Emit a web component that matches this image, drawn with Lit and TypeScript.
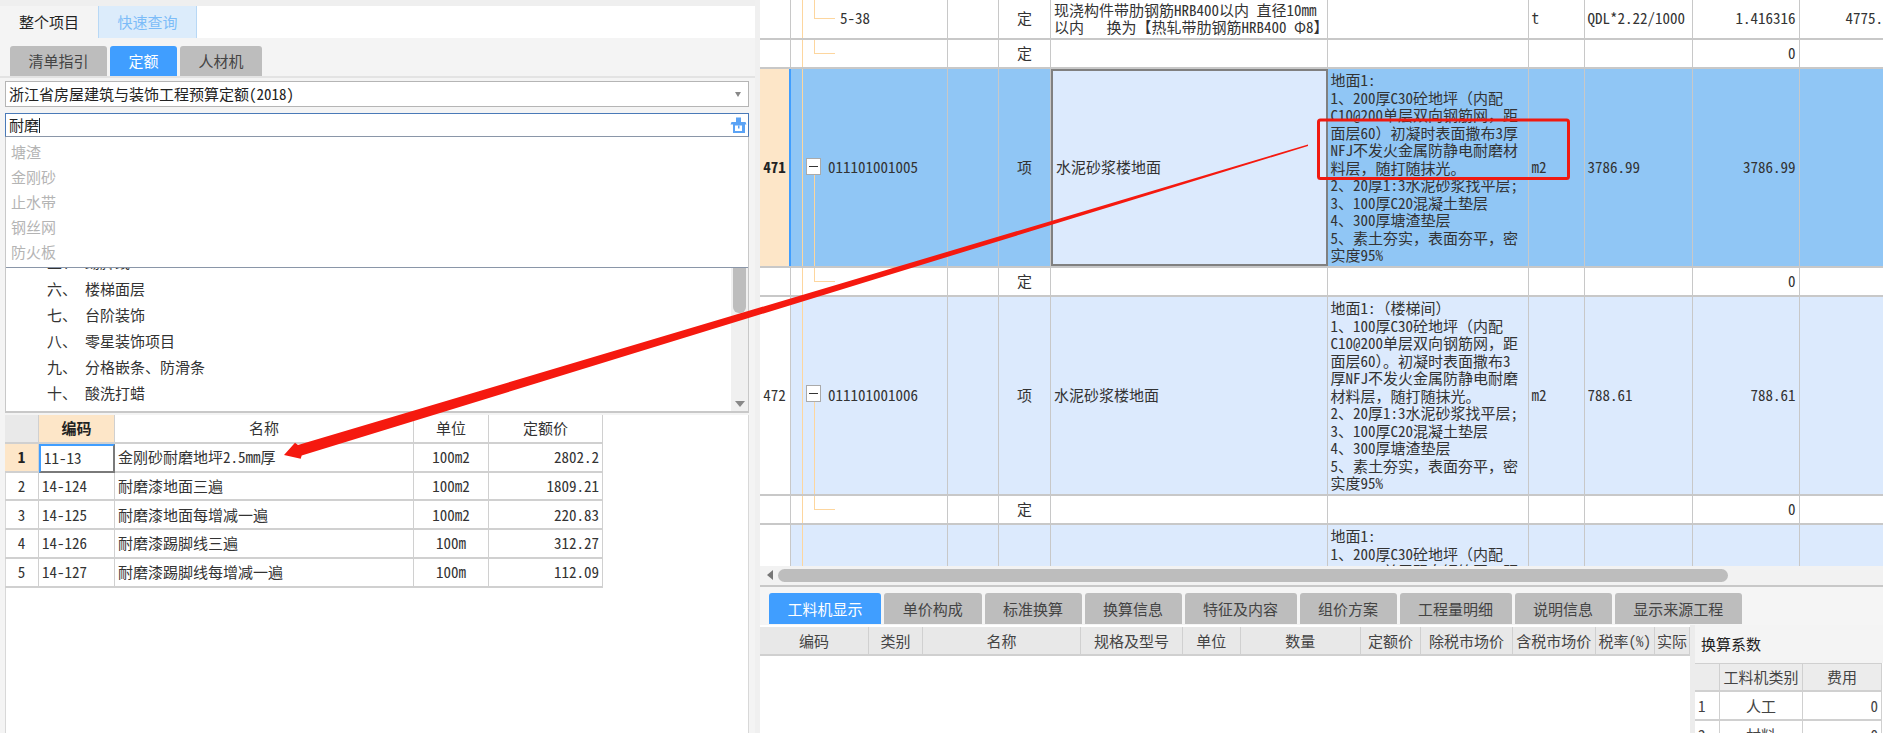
import { LitElement, html, css, svg } from "lit";
import { customElement } from "lit/decorators.js";

const TREE = [
  ["五、", "踢脚线"],
  ["六、", "楼梯面层"], ["七、", "台阶装饰"], ["八、", "零星装饰项目"], ["九、", "分格嵌条、防滑条"], ["十、", "酸洗打蜡"],
];
const QUOTA = [
  ["11-13", "金刚砂耐磨地坪2.5mm厚", "100m2", "2802.2"],
  ["14-124", "耐磨漆地面三遍", "100m2", "1809.21"],
  ["14-125", "耐磨漆地面每增减一遍", "100m2", "220.83"],
  ["14-126", "耐磨漆踢脚线三遍", "100m", "312.27"],
  ["14-127", "耐磨漆踢脚线每增减一遍", "100m", "112.09"],
];
const SUGGEST = ["塘渣", "金刚砂", "止水带", "钢丝网", "防火板"];
const BOTTOM_TABS = ["工料机显示", "单价构成", "标准换算", "换算信息", "特征及内容", "组价方案", "工程量明细", "说明信息", "显示来源工程"];
const BOTTOM_W = [112, 97.5, 97, 97, 112, 97, 112, 97, 127.5];
const HEAD_COLS: [string, number][] = [["编码", 109], ["类别", 54], ["名称", 158], ["规格及型号", 102], ["单位", 57.5], ["数量", 120.5], ["定额价", 60], ["除税市场价", 92], ["含税市场价", 82.5], ["税率(%)", 59.5], ["实际", 35]];

const F471 = `地面1:
1、200厚C30砼地坪（内配
C10@200单层双向钢筋网，距
面层60）初凝时表面撒布3厚
NFJ不发火金属防静电耐磨材
料层，随打随抹光。
2、20厚1:3水泥砂浆找平层;
3、100厚C20混凝土垫层
4、300厚塘渣垫层
5、素土夯实，表面夯平，密
实度95%`;
const F472 = `地面1:（楼梯间）
1、100厚C30砼地坪（内配
C10@200单层双向钢筋网，距
面层60）。初凝时表面撒布3
厚NFJ不发火金属防静电耐磨
材料层，随打随抹光。
2、20厚1:3水泥砂浆找平层;
3、100厚C20混凝土垫层
4、300厚塘渣垫层
5、素土夯实，表面夯平，密
实度95%`;
const F473 = `地面1:
1、200厚C30砼地坪（内配
C10@200单层双向钢筋网，距`;

/* The half-width feature keeps digits at half an em; CJK punctuation stays full width. */
const fw = (text: string) =>
  text.split(/([，（）])/).map((p) => (/^[，（）]$/.test(p) ? html`<span class="fw">${p}</span>` : p));

@customElement("app-root")
export class AppRoot extends LitElement {
  static styles = css`
    :host {
      display: block; position: relative; width: 1883px; height: 733px; overflow: hidden; background: #f4f4f4;
      font-family: "Noto Sans CJK SC", sans-serif; font-size: 15px; line-height: 17.5px; color: #333;
      font-feature-settings: "hwid";
    }
    .fw { font-feature-settings: normal; }
    .root { display: flex; height: 733px; }
    .left { width: 755px; flex: none; display: flex; flex-direction: column; background: #f4f4f4; }
    .top-pad { height: 6px; background: #efefef; }
    .top-tabs { display: flex; height: 32px; background: #fff; }
    .tt { display: flex; align-items: center; justify-content: center; }
    .tt.a { width: 98px; background: #f4f4f4; color: #222; }
    .tt.b { width: 99px; background: #dcecfb; color: #7cbcf8; border-left: 1px solid #b8d8f5; border-right: 1px solid #b8d8f5; box-sizing: border-box; }
    .sub-tabs { display: flex; gap: 3px; height: 30px; padding: 8px 0 0 10px; border-bottom: 2px solid #e3e3e3; }
    .st { background: #bdbdbd; color: #444; border-radius: 3px 3px 0 0; display: flex; align-items: center; justify-content: center; }
    .st.on { background: #409eff; color: #fff; }
    .pick { margin: 3px 6px 0 5px; height: 26px; box-sizing: border-box; border: 1px solid #b5b5b5; background: #fff; display: flex; align-items: center; padding-left: 3px; color: #222; justify-content: space-between; }
    .caret { width: 0; height: 0; border: 3px solid transparent; border-top: 5px solid #888; border-bottom: 0; margin-right: 7px; }
    .search { margin: 6px 6px 0 5px; height: 24px; box-sizing: border-box; border: 1px solid #4a7ab8; border-bottom-color: #8a96a8; background: #fff; display: flex; align-items: center; justify-content: space-between; padding: 0 1px 0 3px; color: #222; }
    .cursor { display: inline-block; width: 1px; height: 15px; background: #222; vertical-align: -2px; }
    .tree { position: relative; margin: 0 6px 0 5px; height: 276px; box-sizing: border-box; background: #fff; border-left: 1px solid #c8c8c8; border-right: 1px solid #c8c8c8; border-bottom: 2px solid #c8c8c8; padding-top: 112px; overflow: hidden; }
    .tree-row { height: 26.2px; display: flex; align-items: center; padding-left: 41px; color: #333; }
    .tree-row b { font-weight: 400; width: 38px; }
    .drop { position: absolute; left: -1px; right: -1px; top: 0; height: 131px; box-sizing: border-box; background: #fff; border: 1px solid #8a96a8; border-top: 0; padding: 2px 0 0 5px; color: #b4b4b4; }
    .drop div { height: 25px; display: flex; align-items: center; }
    .vbar { position: absolute; right: 0; top: 0; bottom: 0; width: 17px; background: #f0f0f0; }
    .vthumb { position: absolute; left: 2px; right: 2px; top: 100px; height: 76px; background: #bdbdbd; border-radius: 0 0 6px 6px; }
    .varrow { position: absolute; left: 4px; bottom: 4px; width: 0; height: 0; border: 5px solid transparent; border-top: 6px solid #888; border-bottom: 0; }
    .quota { margin: 2px 6px 0 5px; flex: 1; background: #fff; box-shadow: inset 1px 0 #d8d8d8, inset -1px 0 #d8d8d8; }
    .q-grid { display: grid; grid-template-columns: 34px 76px 299px 75px 114px; width: 598px; }
    .q-grid > div { height: 28.8px; box-sizing: border-box; border-right: 1px solid #d0d0d0; border-bottom: 2px solid #d0d0d0; display: flex; align-items: center; padding: 0 3px 1px; white-space: nowrap; }
    .q-grid .hd { justify-content: center; }
    .q-grid .ctr { justify-content: center; }
    .q-grid .rt { justify-content: flex-end; }
    .q-grid .rowh { justify-content: center; }
    .q-grid .corner { background: #e9e9e9; }
    .q-grid .hot { background: #fde6c8; font-weight: 700; color: #222; }
    .q-grid .cur { border: 2px solid #7a7a7a; border-top-color: #409eff; border-left-color: #409eff; }

    .divider { width: 5px; flex: none; background: #f0f0f0; }
    .right { flex: 1; min-width: 0; display: flex; flex-direction: column; }
    .sheet { height: 566px; overflow: hidden; background: #fff; position: relative; }
    .row { display: grid; grid-template-columns: 29px 2px 157px 51px 52px 276.5px 201px 56px 108px 107px 90px; box-sizing: border-box; border-bottom: 2px solid #c8c8c8; }
    .row > div { border-right: 1px solid #c8c8c8; box-sizing: border-box; display: flex; align-items: center; padding: 0 3px 2px; position: relative; min-width: 0; white-space: nowrap; overflow: hidden; }
    .row .rowh { justify-content: center; padding: 0 0 2px; border-right: 0; }
    .row .bar { padding: 0; border-right: 1px solid #c8c8c8; }
    .row .rt { justify-content: flex-end; }
    .row .mid { justify-content: center; }
    .row .feat { align-items: flex-start; padding: 2px 3px 0; }
    .row .price { padding-left: 46px; }
    .row.sel > div { background: #90c6f5; }
    .row.sel .rowh { background: #fde6c8; font-weight: 700; color: #222; }
    .row.sel .bar { background: #409eff; border-right: 0; }
    .row.sel .namecell { background: #dceafd; border: 2px solid #808080; }
    .row.tint > div { background: #dceafd; }
    .row.tint .rowh, .row.tint .bar { background: #fff; }
    .vl { position: absolute; width: 1px; background: #fdd69e; }
    .hl { position: absolute; height: 1px; background: #fdd69e; }
    .minus { position: absolute; left: 15px; width: 15px; height: 17px; box-sizing: border-box; background: #fff; border: 1px solid #aaa; display: flex; align-items: center; justify-content: center; }
    .minus i { display: block; width: 9px; height: 1px; background: #333; }
    .code { padding-left: 34px; }
    .sub { padding-left: 46px; }
    .prewrap { white-space: pre; }
    .hscroll { height: 21px; box-sizing: border-box; background: #f2f2f2; border-bottom: 2px solid #c8c8c8; position: relative; display: flex; align-items: center; padding: 0 0 1px 7px; gap: 5px; flex: none; }
    .harrow { width: 0; height: 0; border: 5px solid transparent; border-right: 6px solid #777; border-left: 0; }
    .hthumb { width: 950px; height: 13px; background: #bdbdbd; border-radius: 7px; }
    .btabs { display: flex; gap: 3px; height: 32px; padding: 6px 0 0 9px; flex: none; background: #f5f5f5; }
    .bt { background: #bdbdbd; color: #444; border-radius: 3px 3px 0 0; display: flex; align-items: center; justify-content: center; box-sizing: border-box; height: 31px; white-space: nowrap; }
    .bt.on { background: #409eff; color: #fff; }
    .lower { flex: 1; display: flex; min-height: 0; background: #fff; }
    .lower-main { width: 930px; flex: none; overflow: hidden; }
    .lh { display: flex; height: 29px; box-sizing: border-box; background: #e8e8e8; border-bottom: 2px solid #d0d0d0; margin-top: 2px; }
    .lh div { flex: none; box-sizing: border-box; border-right: 1px solid #d0d0d0; display: flex; align-items: center; justify-content: center; white-space: nowrap; overflow: hidden; color: #444; }
    .coef { flex: 1; background: #f4f4f4; border-left: 5px solid #ececec; display: flex; flex-direction: column; min-width: 0; }
    .coef h4 { margin: 0; font-weight: 400; font-size: 15px; height: 38px; display: flex; align-items: center; padding-left: 6px; color: #222; flex: none; }
    .c-grid { display: grid; grid-template-columns: 25px 83px 79px; background: #fff; }
    .c-grid div { height: 29px; box-sizing: border-box; border-right: 1px solid #d0d0d0; border-bottom: 2px solid #d0d0d0; display: flex; align-items: center; justify-content: center; padding: 0 3px; color: #444; }
    .c-grid .hd { background: #ececec; border-top: 1px solid #d0d0d0; }
    .c-grid .l { justify-content: flex-start; }
    .c-grid .r { justify-content: flex-end; }
    .annot { position: absolute; left: 0; top: 0; width: 1883px; height: 733px; pointer-events: none; }
  `;

  private sheetRow(o: { cls?: string; h: number; num?: string; code?: unknown; kind?: string; name?: unknown; feat?: string; unit?: string; expr?: string; qty?: string; price?: string; deco?: unknown }) {
    return html`<div class="row ${o.cls ?? ""}" style="height:${o.h}px">
      <div class="rowh">${o.num ?? ""}</div>
      <div class="bar"></div>
      <div>${o.deco ?? ""}${o.code ?? ""}</div>
      <div></div>
      <div class="mid">${o.kind ?? ""}</div>
      <div class="namecell">${o.name ?? ""}</div>
      <div class="${o.feat ? "feat" : ""}">${o.feat ? html`<span class="prewrap">${fw(o.feat)}</span>` : ""}</div>
      <div>${o.unit ?? ""}</div>
      <div>${o.expr ?? ""}</div>
      <div class="rt">${o.qty ?? ""}</div>
      <div class="price">${o.price ?? ""}</div>
    </div>`;
  }

  private treeLines(h: number, opts: { branchY?: number; box?: number; subFrom?: number; subTo?: number }) {
    return html`
      <span class="vl" style="left:11px;top:0;height:${h}px"></span>
      ${opts.subTo !== undefined ? html`<span class="vl" style="left:23px;top:${opts.subFrom ?? 0}px;height:${opts.subTo - (opts.subFrom ?? 0)}px"></span>` : ""}
      ${opts.branchY !== undefined ? html`<span class="hl" style="left:23px;width:21px;top:${opts.branchY}px"></span>` : ""}
      ${opts.box !== undefined ? html`<span class="minus" style="top:${opts.box}px"><i></i></span>` : ""}
    `;
  }

  render() {
    return html`
      <div class="root">
        <div class="left">
          <div class="top-pad"></div>
          <div class="top-tabs">
            <div class="tt a">整个项目</div>
            <div class="tt b">快速查询</div>
          </div>
          <div class="sub-tabs">
            <div class="st" style="width:97px">清单指引</div>
            <div class="st on" style="width:67px">定额</div>
            <div class="st" style="width:82px">人材机</div>
          </div>
          <div class="pick"><span>浙江省房屋建筑与装饰工程预算定额(2018)</span><span class="caret"></span></div>
          <div class="search">
            <span>耐磨<span class="cursor"></span></span>
            <svg width="17" height="17" viewBox="0 0 17 17">
              <path d="M6 0.5h5v4.5h4.5l1 2.5h-1.5v8.5H3V7.5H0.5l1-2.5H6z" fill="#5ba3f5"/>
              <rect x="5" y="8.5" width="7" height="5.5" fill="#fff"/>
              <rect x="8" y="8.5" width="1.5" height="3" fill="#5ba3f5"/>
            </svg>
          </div>
          <div class="tree">
            ${TREE.map(([n, t]) => html`<div class="tree-row"><b>${n}</b>${t}</div>`)}
            <div class="vbar"><div class="vthumb"></div><div class="varrow"></div></div>
            <div class="drop">${SUGGEST.map((s) => html`<div>${s}</div>`)}</div>
          </div>
          <div class="quota">
            <div class="q-grid">
              <div class="corner"></div><div class="hot hd">编码</div><div class="hd">名称</div><div class="hd">单位</div><div class="hd">定额价</div>
              ${QUOTA.map((r, i) => html`
                <div class="rowh ${i === 0 ? "hot" : ""}">${i + 1}</div>
                <div class="${i === 0 ? "cur" : ""}">${r[0]}</div>
                <div>${r[1]}</div>
                <div class="ctr">${r[2]}</div>
                <div class="rt">${r[3]}</div>
              `)}
            </div>
          </div>
        </div>
        <div class="divider"></div>
        <div class="right">
          <div class="sheet">
            ${this.sheetRow({ h: 40, kind: "定", deco: this.treeLines(40, { subFrom: 0, subTo: 18, branchY: 18 }), code: html`<span class="sub">5-38</span>`,
              name: html`<span class="prewrap">现浇构件带肋钢筋HRB400以内 直径10mm
以内   换为【热轧带肋钢筋HRB400 Φ8】</span>`, unit: "t", expr: "QDL*2.22/1000", qty: "1.416316", price: "4775.51" })}
            ${this.sheetRow({ h: 29, kind: "定", deco: this.treeLines(29, { subFrom: 0, subTo: 13, branchY: 13 }), qty: "0" })}
            ${this.sheetRow({ cls: "sel", h: 199, num: "471", kind: "项", deco: this.treeLines(199, { box: 89, subFrom: 105, subTo: 199 }), code: html`<span class="code">011101001005</span>`, name: "水泥砂浆楼地面", feat: F471, unit: "m2", expr: "3786.99", qty: "3786.99" })}
            ${this.sheetRow({ h: 29, kind: "定", deco: this.treeLines(29, { subFrom: 0, subTo: 13, branchY: 13 }), qty: "0" })}
            ${this.sheetRow({ cls: "tint", h: 199, num: "472", kind: "项", deco: this.treeLines(199, { box: 88, subFrom: 104, subTo: 199 }), code: html`<span class="code">011101001006</span>`, name: "水泥砂浆楼地面", feat: F472, unit: "m2", expr: "788.61", qty: "788.61" })}
            ${this.sheetRow({ h: 29, kind: "定", deco: this.treeLines(29, { subFrom: 0, subTo: 13, branchY: 13 }), qty: "0" })}
            ${this.sheetRow({ cls: "tint", h: 199, deco: this.treeLines(199, {}), feat: F473 })}
          </div>
          <div class="hscroll"><span class="harrow"></span><span class="hthumb"></span></div>
          <div class="btabs">
            ${BOTTOM_TABS.map((t, i) => html`<div class="bt ${i === 0 ? "on" : ""}" style="width:${BOTTOM_W[i]}px">${t}</div>`)}
          </div>
          <div class="lower">
            <div class="lower-main">
              <div class="lh">${HEAD_COLS.map(([t, w]) => html`<div style="width:${w}px">${t}</div>`)}</div>
            </div>
            <div class="coef">
              <h4>换算系数</h4>
              <div class="c-grid">
                <div class="hd"></div><div class="hd">工料机类别</div><div class="hd">费用</div>
                <div class="l">1</div><div>人工</div><div class="r">0</div>
                <div class="l">2</div><div>材料</div><div class="r">0</div>
              </div>
            </div>
          </div>
        </div>
      </div>
      <svg class="annot" viewBox="0 0 1883 733">
        ${svg`<rect x="1318.5" y="120" width="250" height="58.5" rx="2" fill="none" stroke="#f01a10" stroke-width="3"/>
        <polygon points="1308,144.5 298,445 295,442.7 284,455 300.7,458.7 301.7,455.5 1308,146" fill="#f5190f"/>`}
      </svg>
    `;
  }
}
